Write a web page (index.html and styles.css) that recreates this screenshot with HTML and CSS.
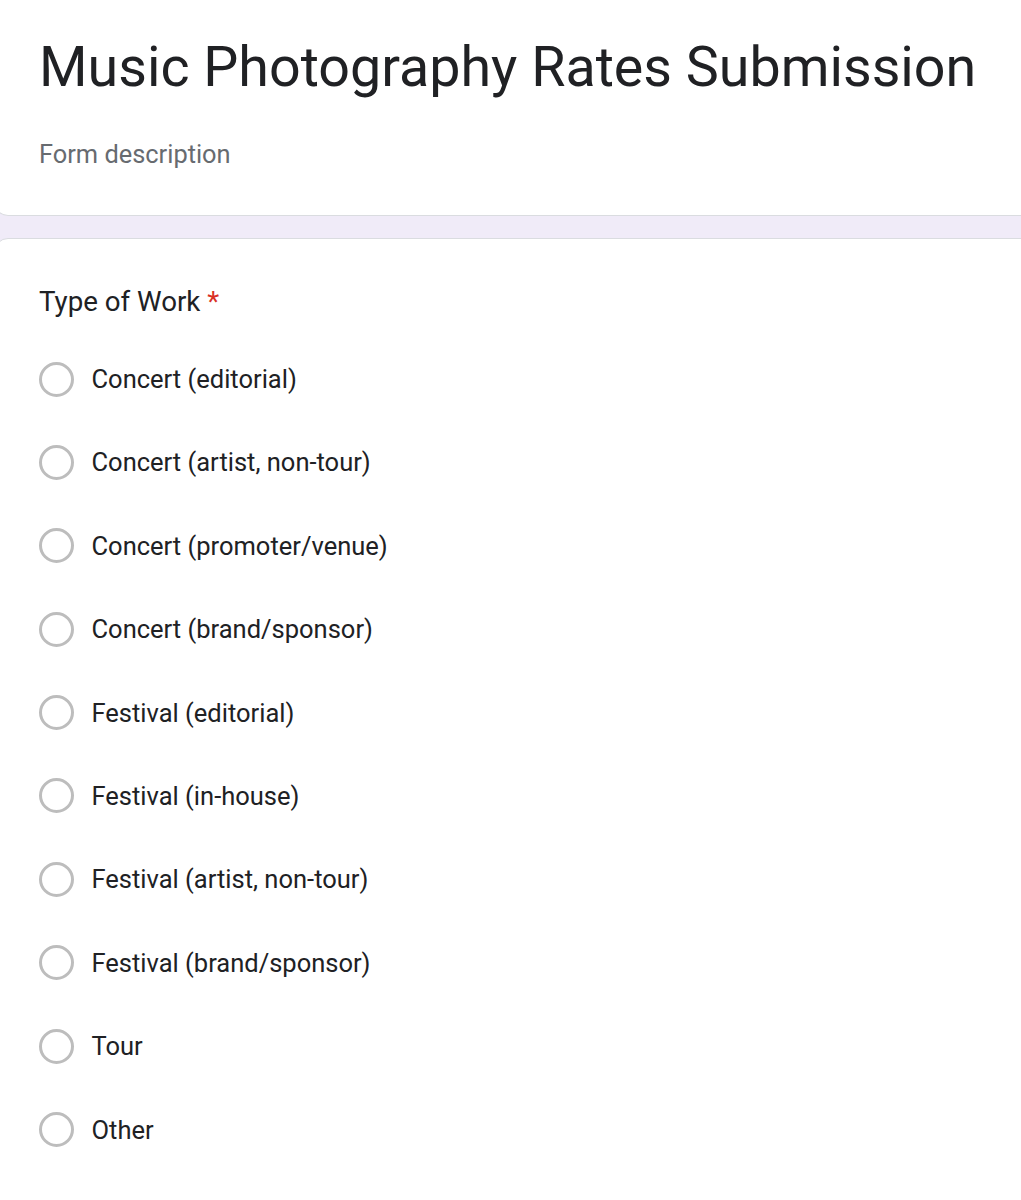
FILE: index.html
```html
<!DOCTYPE html>
<html lang="en">
<head>
<meta charset="utf-8">
<title>Music Photography Rates Submission</title>
<link rel="stylesheet" href="styles.css">
</head>
<body>
<div class="page">
  <section class="card card-header">
    <h1 class="form-title">Music Photography Rates Submission</h1>
    <div class="form-desc">Form description</div>
  </section>
  <section class="card card-question">
    <div class="question-title">Type of Work <span class="req">*</span></div>
    <div class="options">
      <label class="option"><span class="radio"></span><span class="opt-text">Concert (editorial)</span></label>
      <label class="option"><span class="radio"></span><span class="opt-text">Concert (artist, non-tour)</span></label>
      <label class="option"><span class="radio"></span><span class="opt-text">Concert (promoter/venue)</span></label>
      <label class="option"><span class="radio"></span><span class="opt-text">Concert (brand/sponsor)</span></label>
      <label class="option"><span class="radio"></span><span class="opt-text">Festival (editorial)</span></label>
      <label class="option"><span class="radio"></span><span class="opt-text">Festival (in-house)</span></label>
      <label class="option"><span class="radio"></span><span class="opt-text">Festival (artist, non-tour)</span></label>
      <label class="option"><span class="radio"></span><span class="opt-text">Festival (brand/sponsor)</span></label>
      <label class="option"><span class="radio"></span><span class="opt-text">Tour</span></label>
      <label class="option"><span class="radio"></span><span class="opt-text">Other</span></label>
    </div>
  </section>
</div>
</body>
</html>
```

FILE: styles.css
```css
html, body {
  margin: 0;
  padding: 0;
}
body {
  background: #f0ebf8;
  font-family: Roboto, "Liberation Sans", Arial, sans-serif;
  color: #202124;
  overflow: hidden;
}
.page {
  display: flex;
  flex-direction: column;
  gap: 22px;
  margin-left: -6px;
  margin-right: -40px;
}
.card {
  background: #fff;
  border: 1px solid #dadce0;
  border-radius: 14px;
  padding-left: 44px;
  padding-right: 40px;
}
.card-header {
  border-top: none;
  border-top-left-radius: 0;
  border-top-right-radius: 0;
  padding-top: 32px;
  padding-bottom: 42px;
}
.form-title {
  margin: 0;
  font-weight: 400;
  font-size: 55.6px;
  line-height: 70px;
  color: #202124;
  white-space: nowrap;
}
.form-desc {
  margin-top: 34px;
  font-size: 25.4px;
  line-height: 36.75px;
  color: #676b70;
}
.card-question {
  padding-top: 42px;
  padding-bottom: 40px;
}
.question-title {
  font-size: 27.7px;
  line-height: 42px;
  color: #202124;
}
.req {
  color: #d93025;
}
.options {
  display: flex;
  flex-direction: column;
  margin-top: 14.6px;
}
.option {
  display: flex;
  align-items: center;
  gap: 17.5px;
  height: 83.4px;
}
.radio {
  box-sizing: border-box;
  width: 35px;
  height: 35px;
  border: 3.5px solid #bdbdbd;
  border-radius: 50%;
  flex: none;
}
.opt-text {
  font-size: 25.5px;
  line-height: 36px;
  color: #202124;
}
```
